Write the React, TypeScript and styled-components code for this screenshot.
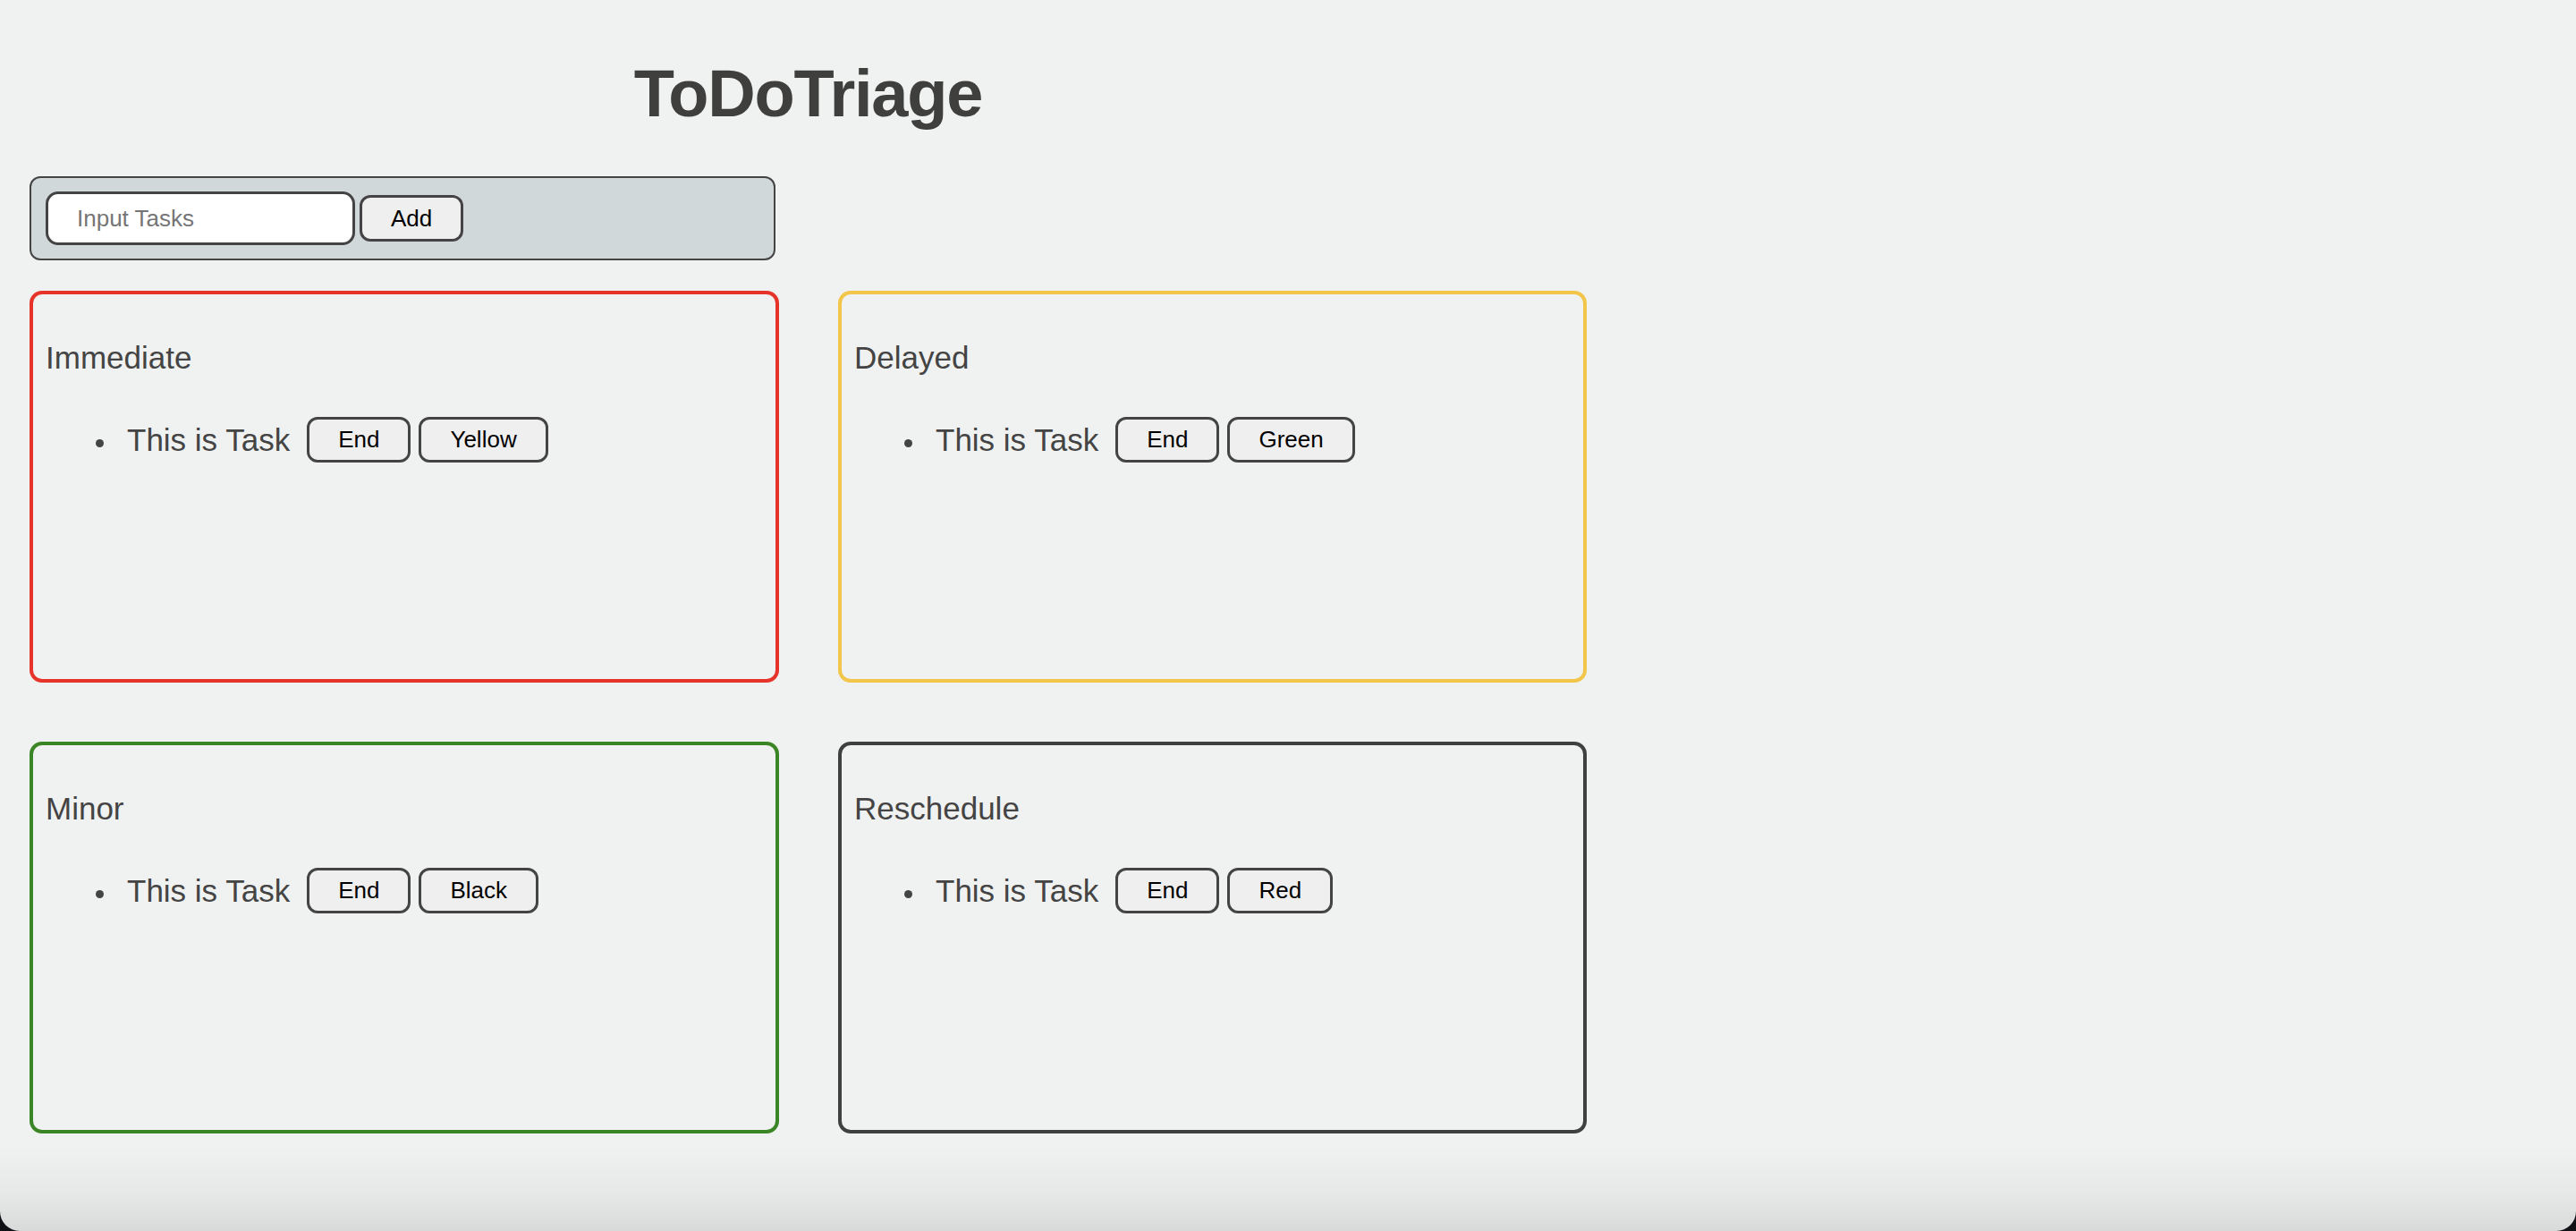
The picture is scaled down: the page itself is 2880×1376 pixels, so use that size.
import React, { useState } from 'react';
import styled, { createGlobalStyle } from 'styled-components';

const GlobalStyle = createGlobalStyle`
  html, body {
    margin: 0;
    padding: 0;
    background: #101114;
  }
  body {
    font-family: "Liberation Sans", Arial, Helvetica, sans-serif;
  }
  * {
    box-sizing: border-box;
  }
`;

const Page = styled.div`
  min-height: 100vh;
  padding: 62px 33px 0;
  background: linear-gradient(to bottom, #f0f2f1 0, #f0f2f1 calc(100% - 96px), #e6e8e7 calc(100% - 40px), #d8dad9 100%);
  border-radius: 0 0 22px 22px;
`;

const Container = styled.div`
  width: 1741px;
`;

const Title = styled.h1`
  margin: 0;
  text-align: center;
  font-size: 74px;
  line-height: 1.15;
  font-weight: 700;
  letter-spacing: -1.2px;
  color: #3f3f3d;
`;

const InputBar = styled.form`
  margin-top: 50px;
  width: 834px;
  height: 94px;
  padding: 15px 16px;
  display: flex;
  align-items: center;
  gap: 5px;
  background: #d0d8da;
  border: 2px solid #444;
  border-radius: 12px;
`;

const TaskInput = styled.input`
  width: 346px;
  height: 60px;
  padding: 0 32px;
  border: 3px solid #444;
  border-radius: 14px;
  background: #fff;
  font-family: inherit;
  font-size: 26px;
  color: #222;
  outline: none;

  &::placeholder {
    color: #757575;
  }
`;

const Button = styled.button<{ $height?: number }>`
  height: ${(p) => p.$height ?? 51}px;
  padding: 0 32px;
  border: 3px solid #444;
  border-radius: 12px;
  background: #efefef;
  font-family: inherit;
  font-size: 26px;
  color: #000;
  cursor: pointer;
`;

const Grid = styled.div`
  margin-top: 34px;
  display: grid;
  grid-template-columns: 838px 837px;
  column-gap: 66px;
  row-gap: 66px;
`;

const Card = styled.section<{ $color: string }>`
  height: 438px;
  padding: 0 14px;
  border: 4px solid ${(p) => p.$color};
  border-radius: 14px;
`;

const CardTitle = styled.h2`
  margin: 51px 0 0;
  font-size: 35px;
  line-height: 40px;
  font-weight: 400;
  color: #444;
`;

const TaskList = styled.ul`
  list-style: none;
  margin: 46px 0 0;
  padding: 0;
`;

const TaskRow = styled.li`
  display: flex;
  align-items: center;
`;

const Bullet = styled.span`
  width: 9px;
  height: 9px;
  margin: 7px 26px 0 56px;
  border-radius: 50%;
  background: #444;
`;

const TaskText = styled.span`
  font-size: 35px;
  color: #444;
  margin-right: 19px;
`;

const Actions = styled.div`
  display: flex;
  gap: 9px;
`;

type Quadrant = {
  name: string;
  color: string;
  next: string;
};

const quadrants: Quadrant[] = [
  { name: 'Immediate', color: '#e6342a', next: 'Yellow' },
  { name: 'Delayed', color: '#f2c54b', next: 'Green' },
  { name: 'Minor', color: '#3a8526', next: 'Black' },
  { name: 'Reschedule', color: '#404040', next: 'Red' },
];

export default function App() {
  const [text, setText] = useState('');

  return (
    <>
      <GlobalStyle />
      <Page>
        <Container>
          <Title>ToDoTriage</Title>
          <InputBar onSubmit={(e) => e.preventDefault()}>
            <TaskInput
              type="text"
              placeholder="Input Tasks"
              value={text}
              onChange={(e) => setText(e.target.value)}
            />
            <Button type="submit" $height={52}>Add</Button>
          </InputBar>

          <Grid>
            {quadrants.map((q) => (
              <Card key={q.name} $color={q.color}>
                <CardTitle>{q.name}</CardTitle>
                <TaskList>
                  <TaskRow>
                    <Bullet />
                    <TaskText>This is Task</TaskText>
                    <Actions>
                      <Button type="button">End</Button>
                      <Button type="button">{q.next}</Button>
                    </Actions>
                  </TaskRow>
                </TaskList>
              </Card>
            ))}
          </Grid>
        </Container>
      </Page>
    </>
  );
}
